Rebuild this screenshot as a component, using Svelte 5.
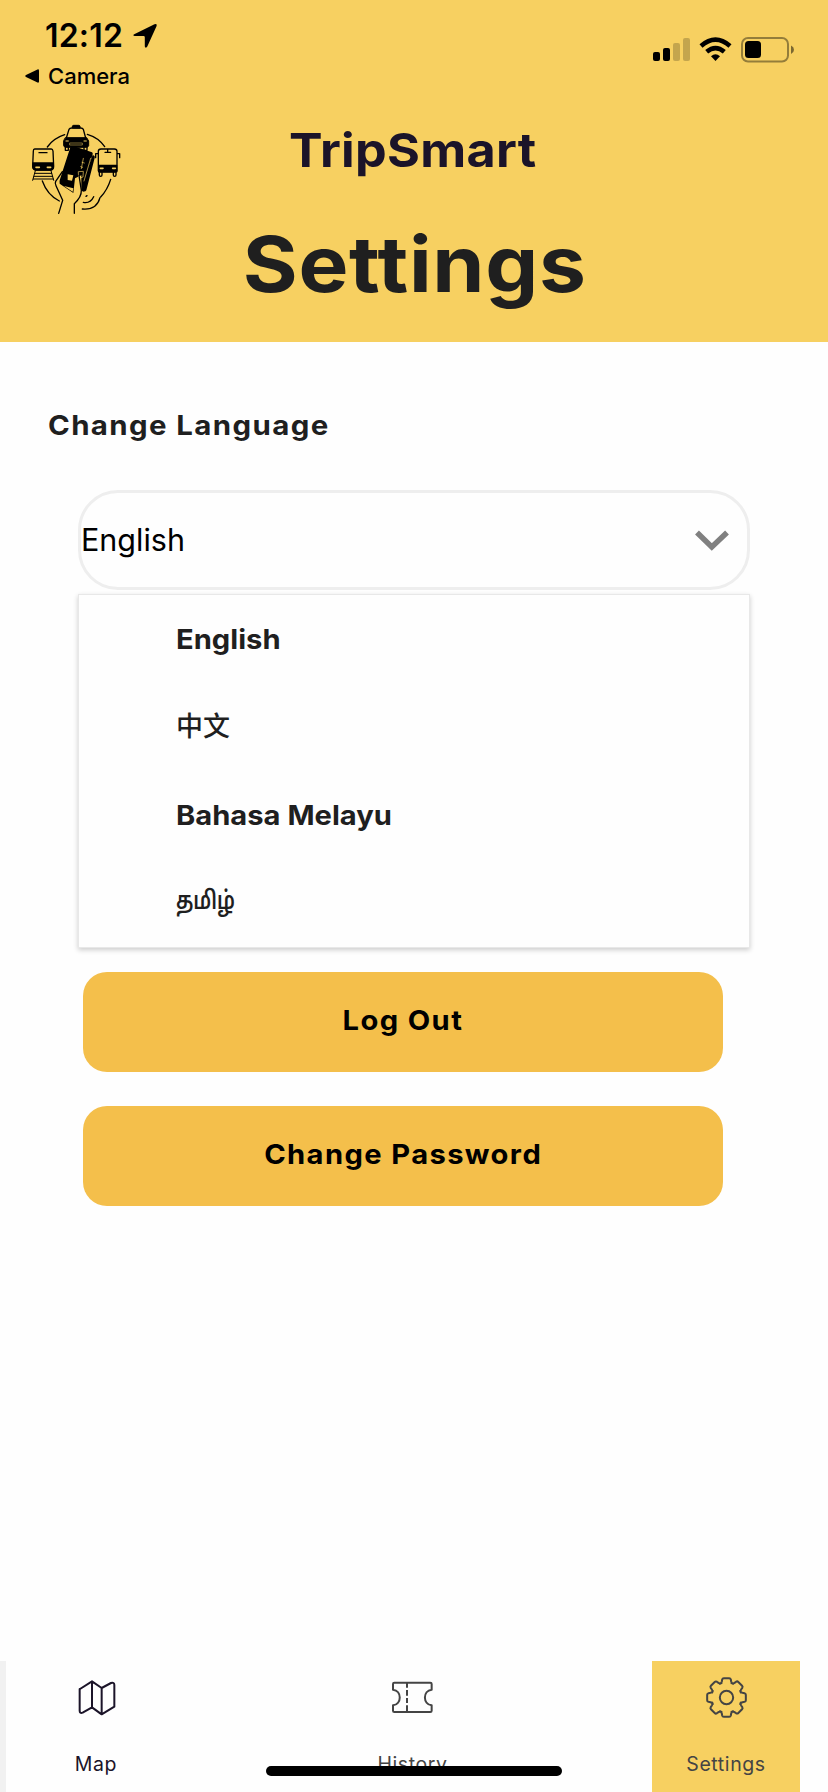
<script>
  const languages = [
    { label: 'English', cls: 'latin' },
    { label: '中文', cls: 'zh' },
    { label: 'Bahasa Melayu', cls: 'latin' },
    { label: 'தமிழ்', cls: 'ta' }
  ];

  // Gear outline: eight rounded teeth around the hub
  const teeth = [];
  for (let i = 0; i < 8; i++) {
    const a = (i * Math.PI) / 4;
    const p = (x, y) =>
      `${(x * Math.cos(a) - y * Math.sin(a)).toFixed(1)} ${(x * Math.sin(a) + y * Math.cos(a)).toFixed(1)}`;
    teeth.push(
      `${i ? 'L' : 'M'}${p(-20, -41)}Q${p(-15, -43)} ${p(-14, -48)}L${p(-13, -54)}Q${p(-12, -58)} ${p(-8, -58)}L${p(8, -58)}Q${p(12, -58)} ${p(13, -54)}L${p(14, -48)}Q${p(15, -43)} ${p(20, -41)}`
    );
  }
  const gear = teeth.join('') + 'Z';
</script>

<div class="page">
  <header>
    <div class="status">
      <div class="left">
        <div class="clock"><span class="time">12:12</span>
          <svg width="26" height="26" viewBox="0 0 26 26"><path d="M2.2 11.2 22.5 1.2Q25.4.2 24.6 3L15.3 23.6Q13.8 26 12.8 23.4V14.2Q12.8 13 11.6 13H2.8Q.2 12.5 2.2 11.2Z" /></svg>
        </div>
        <div class="back">
          <svg width="15" height="14" viewBox="0 0 15 14"><path d="M1 6 12.5.4Q14 0 14 1.5V12.5Q14 14 12.5 13.5L1 8Q-.5 7 1 6Z" /></svg>
          <span>Camera</span>
        </div>
      </div>
      <svg class="sys" width="142" height="26" viewBox="0 0 142 26">
        <rect x="0" y="15" width="7" height="9" rx="2" />
        <rect x="10" y="11" width="7" height="13" rx="2" />
        <g opacity=".2"><rect x="20" y="6" width="7" height="18" rx="2" /><rect x="30" y="1" width="7" height="23" rx="2" /></g>
        <g fill="none" stroke="#000" stroke-width="4.6"><path d="M48 9Q62.5-3.6 77 9" /><path d="M53.7 14.8Q62.5 7.4 71.3 14.8" /></g>
        <path d="M58 19.2Q62.5 15.5 67 19.2L62.5 24Z" />
        <rect x="89" y="1" width="46" height="23.5" rx="6" fill="none" stroke="#000" stroke-opacity=".4" stroke-width="2" />
        <rect x="92" y="4" width="16" height="17" rx="3.5" />
        <path d="M138 8.5Q141 10 141 12.7T138 17Z" opacity=".5" />
      </svg>
    </div>
    <div class="brand">
      <svg width="110" height="110" viewBox="0 0 330 330" fill="none" stroke="#000" stroke-width="4" stroke-linecap="round" stroke-linejoin="round">
        <path d="M82 96Q100 70 134 59M202 58Q236 68 254 95M67 198Q82 240 118 258M272 193Q262 225 242 246" />
        <!-- taxi -->
        <path d="M139 69 147 43Q149 39 155 39H182Q188 39 190 43L197 69" />
        <path d="M157 38V33Q158 31 161 31H176Q179 31 180 33V38ZM137 68H200L206 78V92Q205 96 200 97H137Q132 96 131 92V78Z" fill="#000" stroke-width="3" />
        <path d="M150 84H187V90H150Z" fill="#000" stroke="#f7d061" stroke-width="1.5" />
        <path d="M138 78H145M192 78H199" stroke="#f7d061" stroke-width="3" />
        <path d="M136 96V106H145V97M192 97V106H201V96" />
        <!-- train -->
        <path d="M44 102H94Q98 102 99 108L101 154Q101 164 92 165H47Q38 164 38 154L40 108Q40 102 44 102ZM57 113H81" />
        <path d="M39 144H100V158Q98 164 92 165H47Q39 163 39 156Z" fill="#000" />
        <path d="M48 157H58M82 157H92" stroke="#f7d061" stroke-width="5" />
        <path d="M46 167 38 196M93 167 101 196M45 175H95M42 184H98M40 192H100" stroke-width="3" />
        <!-- bus -->
        <path d="M243 102H283Q291 102 291 109V167Q291 171 286 171H240Q235 171 235 167V109Q235 102 243 102ZM263 103V111M255 112H272M235 116H227V128M291 116H299V128" />
        <path d="M236 151H290V170H236Z" fill="#000" /><path d="M241 160H249M278 160H286" stroke="#f7d061" stroke-width="5" />
        <path d="M238 172V180Q238 184 242 184T246 180V172M280 172V180Q280 184 284 184T288 180V172" />
        <!-- hand and fare card -->
        <path d="M151 97Q154 92 160 93L216 112Q219 114 218 118L196 191Q200 207 190 230L184 226V181L165 190L160 234L119 206Q117 200 120 193Z" fill="#000" stroke="none" />
        <path d="M218 120Q226 122 224 129L199 226Q196 231 188 229L185 224 193 190Z" fill="#000" stroke="none" />
        <path d="M143 178 160 181 156 197 143 195ZM132 213 158 230 160 220Z" fill="#f7d061" stroke="none" />
        <path d="M190 130 184 161M193 144 186 142M188 157 182 155M176 170 190 169 189 186 177 190ZM212 130 192 198" stroke="#f7d061" stroke-width="2" />
        <path d="M127 170 107 199Q104 205 108 212L128 256 116 295M177 181 184 226Q185 246 163 266V295" />
        <path d="M198 244 201 242M190 262Q211 266 221 245M187 282Q230 286 240 248" />
      </svg>
      <h2><span>TripSmart</span></h2>
    </div>
    <h1><span>Settings</span></h1>
  </header>

  <main>
    <h3><span>Change Language</span></h3>
    <div class="picker">
      <div class="select">
        <span>English</span>
        <svg width="36" height="24" viewBox="0 0 36 24"><path d="M3 4.5 17.8 19 33 4.5" fill="none" stroke="#808080" stroke-width="5.5" /></svg>
      </div>
      <ul class="menu">
        {#each languages as l}
          <li class={l.cls}><span>{l.label}</span></li>
        {/each}
      </ul>
    </div>
    <div class="actions">
      <button><span>Log Out</span></button>
      <button><span>Change Password</span></button>
    </div>
  </main>

  <nav>
    <div class="edge"></div>
    <div class="tab map">
      <svg width="41" height="41" viewBox="0 0 123 123" fill="none" stroke="#1b1429" stroke-width="6" stroke-linejoin="round"><path d="M12 36 48 13 77 33 105 18Q115 15 115 24V89L77 112 48 91 20 107Q11 110 11 101V36ZM48 13V91M77 33V112" /></svg>
      <span>Map</span>
    </div>
    <div class="tab">
      <svg width="41" height="41" viewBox="0 0 123 123" fill="none" stroke="#444" stroke-width="6" stroke-linejoin="round"><path d="M7 17H115Q119 17 119 21V38C92 41 92 82 119 85V101Q119 105 115 105H7Q3 105 3 101V85C30 82 30 41 3 38V21Q3 17 7 17Z" /><path d="M45 17V105" stroke-dasharray="15 7 17 7" /></svg>
      <span>History</span>
    </div>
    <div class="tab active">
      <svg width="41" height="41" viewBox="0 0 123 123" fill="none" stroke="#444" stroke-width="6" stroke-linejoin="round"><g transform="translate(61.5 61.5)"><path d={gear} /><circle r="20" /></g></svg>
      <span>Settings</span>
    </div>
  </nav>
  <div class="home"></div>
</div>

<style>
  :global(body) { margin: 0; background: #fefefe; }
  .page { position: relative; width: 828px; height: 1792px; overflow: hidden; display: flex; flex-direction: column; background: #fefefe; font-family: Inter, 'Noto Sans', sans-serif; color: #1f1f1f; }
  svg { display: block; flex: none; }
  h1, h2, h3, ul { margin: 0; padding: 0; font-weight: 700; white-space: nowrap; }
  h1 span, h2 span, h3 span, li span, button span { display: inline-block; }
  header { height: 342px; background: #f7d061; color: #000; display: flex; flex-direction: column; }
  .status { height: 115px; display: flex; justify-content: space-between; padding: 16px 33px 0 25px; box-sizing: border-box; }
  .clock { display: flex; align-items: center; gap: 9px; line-height: 40px; padding-left: 20px; }
  .time { font-size: 32px; font-weight: 600; letter-spacing: .2px; }
  .back { display: flex; align-items: center; gap: 8px; line-height: 30px; margin-top: 5px; font-size: 22px; font-weight: 500; }
  .sys { margin-top: 21px; }
  .brand { display: grid; grid-template-columns: 110px 1fr 110px; padding: 0 22px 0 20px; height: 110px; }
  h2 { font-size: 47px; line-height: 60px; padding-top: 5px; text-align: center; color: #1b1429; letter-spacing: .3px; }
  h2 span { transform: scaleX(1.07); }
  h1 { font-size: 77px; line-height: 78px; text-align: center; color: #1f1f1f; letter-spacing: .6px; padding-left: 2px; }
  h1 span { transform: scaleX(1.09); }
  main { flex: 1; padding: 68px 78px 0; }
  h3 { margin-left: -30px; font-size: 27.5px; line-height: 30px; letter-spacing: 1.3px; }
  h3 span { transform: scaleX(1.07); transform-origin: left; }
  .picker { position: relative; margin-top: 50px; }
  .select { box-sizing: border-box; height: 100px; border: 3px solid #eee; border-radius: 40px; display: flex; align-items: center; justify-content: space-between; padding: 0 17px 0 0; font-size: 30.5px; color: #000; }
  .select span { padding-bottom: 2px; }
  .menu { position: absolute; top: 105px; left: 1px; width: 670px; list-style: none; background: #fefefe; box-shadow: 0 0 0 1px #e8e8e8, 0 2px 5px 1px #0003; font-size: 27.5px; }
  li { height: 88px; line-height: 88px; padding-left: 97px; }
  li span { transform-origin: left; }
  .latin span { transform: scaleX(1.06); }
  .zh { font-family: 'Noto Sans CJK SC', sans-serif; font-weight: 500; font-size: 27px; line-height: 84px; }
  .ta { font-family: 'Noto Sans Tamil', 'Noto Sans', sans-serif; font-weight: 600; font-size: 25px; line-height: 88px; }
  .ta span { transform: scaleX(.79); }
  .actions { display: flex; flex-direction: column; gap: 34px; width: 640px; margin: 382px 0 0 5px; }
  button { height: 100px; border: 0; border-radius: 24px; background: #f4bf4b; color: #000; font: 700 27.5px Inter, sans-serif; letter-spacing: 1.3px; padding: 0 0 4px; }
  button span { transform: scaleX(1.06); }
  nav { height: 131px; display: flex; }
  .edge { width: 6px; background: #f1f1f1; }
  .tab { width: 453px; display: flex; flex-direction: column; align-items: center; padding-top: 16px; box-sizing: border-box; font-size: 19.5px; line-height: 30px; gap: 31px; letter-spacing: .6px; color: #444; }
  .map { width: 180px; color: #1b1429; }
  .active { width: 148px; margin-left: 13px; background: #f7d061; }
  .home { position: absolute; left: 266px; bottom: 16px; width: 296px; height: 10px; border-radius: 5px; background: #000; }
</style>
